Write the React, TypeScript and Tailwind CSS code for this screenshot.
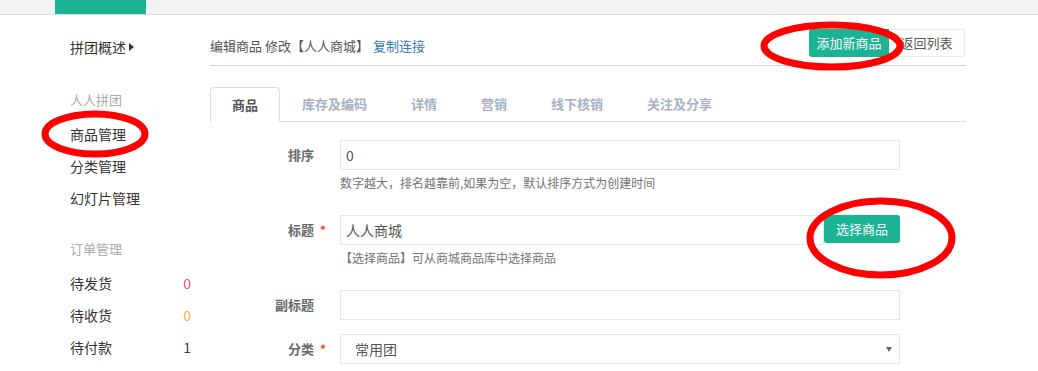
import React from 'react';

const font = { fontFamily: '"Noto Sans CJK SC", "Noto Sans", sans-serif' };

const SideItem = ({ label, count, countClass }: { label: string; count?: string; countClass?: string }) => (
  <div className="flex h-[32px] w-[121px] items-center justify-between text-[14px] text-[#333]">
    <span>{label}</span>
    {count && <span className={countClass}>{count}</span>}
  </div>
);

const tabs = ['商品', '库存及编码', '详情', '营销', '线下核销', '关注及分享'];

const FormRow = ({ label, required, children, className }: { label: string; required?: boolean; children: React.ReactNode; className?: string }) => (
  <div className={'flex ' + (className || '')}>
    <div className="flex h-[30px] w-[104px] items-center justify-end text-[13px] font-bold text-[#676a6c]">{label}</div>
    <div className="flex h-[30px] w-[26px] items-center pl-[6px] text-[12px] font-bold text-[#ff3b1f]">{required ? '*' : ''}</div>
    <div className="w-[560px]">{children}</div>
  </div>
);

const App = () => {
  return (
    <div className="relative h-[371px] w-[1038px] overflow-hidden bg-white" style={font}>
      <div className="h-[15px] border-b border-[#dcdcdc] bg-[#f3f3f4]">
        <div className="ml-[55px] h-[14px] w-[91px] bg-[#1ab394]" />
      </div>

      <div className="flex">
        <aside className="w-[210px] pl-[70px]">
          <div className="mt-[16px] flex h-[32px] items-center text-[14px] text-[#333]">
            拼团概述
            <span className="ml-[3px] inline-block h-0 w-0 border-y-[4px] border-l-[5px] border-y-transparent border-l-[#333]" />
          </div>
          <div className="mt-[21px] flex h-[32px] items-center text-[13px] text-[#aaa]">人人拼团</div>
          <div className="mt-[2px]">
            <SideItem label="商品管理" />
            <SideItem label="分类管理" />
            <SideItem label="幻灯片管理" />
          </div>
          <div className="mt-[19px] flex h-[32px] items-center text-[13px] text-[#aaa]">订单管理</div>
          <div className="mt-[2px]">
            <SideItem label="待发货" count="0" countClass="text-[#ed5565]" />
            <SideItem label="待收货" count="0" countClass="text-[#f8ac59]" />
            <SideItem label="待付款" count="1" countClass="text-[#2f4050]" />
          </div>
        </aside>

        <main className="w-[756px]">
          <div className="flex items-center justify-between border-b border-[#d4d4d4] pt-[14px] pb-[8px]">
            <div className="pt-[6px] text-[13px] text-[#555]">
              编辑商品 修改【人人商城】<span className="ml-[4px] text-[#337ab7]">复制连接</span>
            </div>
            <div className="mr-[1px] flex">
              <button className="h-[28px] w-[80px] rounded-l-[3px] bg-[#1ab394] text-[13px] text-white">添加新商品</button>
              <button className="h-[28px] w-[76px] rounded-r-[3px] border border-l-0 border-[#e7eaec] bg-white text-[13px] text-[#555]">返回列表</button>
            </div>
          </div>

          <div className="mt-[21px] flex h-[35px] border-b border-[#dddddd]">
            {tabs.map((t, i) => (
              <div
                key={t}
                className={
                  i === 0
                    ? 'mb-[-1px] flex h-[35px] items-center rounded-t-[4px] border border-b-0 border-[#dddddd] bg-white px-[21px] text-[13px] font-bold text-[#555]'
                    : 'flex h-[34px] items-center border border-transparent px-[21px] text-[13px] font-bold text-[#a7b1c2]'
                }
              >
                {t}
              </div>
            ))}
          </div>

          <div className="pt-[18px]">
            <FormRow label="排序">
              <div className="flex h-[30px] items-center border border-[#e5e6e7] px-[5px] text-[14px] text-[#555]">0</div>
              <div className="mt-[3px] mb-[22px] h-[20px] text-[12px] leading-[20px] text-[#737373]">数字越大，排名越靠前,如果为空，默认排序方式为创建时间</div>
            </FormRow>
            <FormRow label="标题" required>
              <div className="flex">
                <div className="flex h-[30px] w-[484px] items-center border border-[#e5e6e7] px-[5px] text-[14px] text-[#555]">人人商城</div>
                <button className="h-[28px] w-[76px] rounded-[3px] bg-[#1ab394] text-[13px] text-white">选择商品</button>
              </div>
              <div className="mt-[3px] mb-[22px] h-[20px] text-[12px] leading-[20px] text-[#737373]">【选择商品】可从商城商品库中选择商品</div>
            </FormRow>
            <FormRow label="副标题" className="mb-[14px]">
              <div className="h-[30px] border border-[#e5e6e7]" />
            </FormRow>
            <FormRow label="分类" required>
              <div className="flex h-[30px] items-center justify-between border border-[#e5e6e7] pr-[7px] pl-[14px] text-[14px] text-[#555]">
                <span>常用团</span>
                <span className="inline-block h-0 w-0 border-x-[3px] border-t-[5px] border-x-transparent border-t-[#666]" />
              </div>
            </FormRow>
          </div>
        </main>
      </div>

      <svg className="pointer-events-none absolute top-0 left-0" width="1038" height="371">
        <ellipse cx="832" cy="46" rx="68" ry="21" fill="none" stroke="#ff0000" strokeWidth="7" />
        <ellipse cx="95" cy="134" rx="50" ry="20" fill="none" stroke="#ff0000" strokeWidth="7" />
        <ellipse cx="881" cy="238" rx="71" ry="37" fill="none" stroke="#ff0000" strokeWidth="7" />
      </svg>
    </div>
  );
};

export default App;
